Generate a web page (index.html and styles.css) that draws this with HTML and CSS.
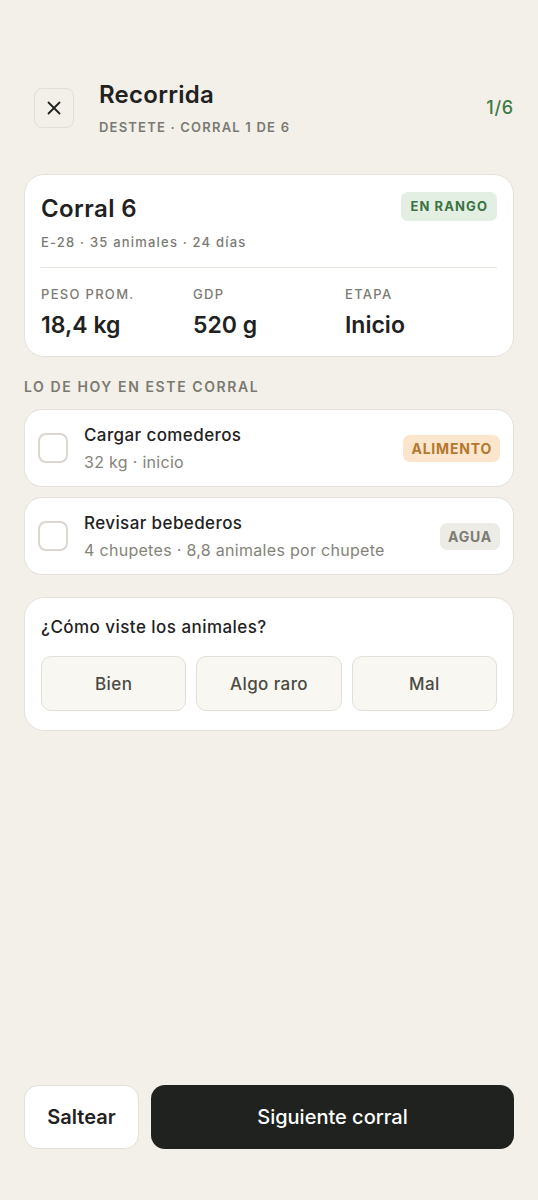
FILE: index.html
```html
<!DOCTYPE html>
<html lang="es">
<head>
<meta charset="utf-8">
<link rel="stylesheet" href="styles.css">
</head>
<body>
<div class="screen">
  <header class="top">
    <button class="close" aria-label="Cerrar">
      <svg width="16" height="16" viewBox="0 0 16 16"><path d="M2.5 2.5 L13.5 13.5 M13.5 2.5 L2.5 13.5" stroke="#1f221e" stroke-width="1.8" stroke-linecap="round"/></svg>
    </button>
    <div class="heading">
      <h1 class="title">Recorrida</h1>
      <div class="subtitle">DESTETE · CORRAL 1 DE 6</div>
    </div>
    <div class="progress">1/6</div>
  </header>

  <section class="card pen">
    <div class="pen-head">
      <div>
        <h2 class="pen-name">Corral 6</h2>
        <div class="pen-meta">E-28 · 35 animales · 24 días</div>
      </div>
      <span class="badge badge-green">EN RANGO</span>
    </div>
    <div class="divider"></div>
    <div class="stats">
      <div class="stat"><div class="stat-label">PESO PROM.</div><div class="stat-value">18,4 kg</div></div>
      <div class="stat"><div class="stat-label">GDP</div><div class="stat-value">520 g</div></div>
      <div class="stat"><div class="stat-label">ETAPA</div><div class="stat-value">Inicio</div></div>
    </div>
  </section>

  <div class="section-label">LO DE HOY EN ESTE CORRAL</div>

  <div class="tasks">
    <div class="card task">
      <span class="check"></span>
      <div class="task-body">
        <div class="task-title">Cargar comederos</div>
        <div class="task-sub">32 kg · inicio</div>
      </div>
      <span class="badge badge-orange">ALIMENTO</span>
    </div>
    <div class="card task">
      <span class="check"></span>
      <div class="task-body">
        <div class="task-title">Revisar bebederos</div>
        <div class="task-sub">4 chupetes · 8,8 animales por chupete</div>
      </div>
      <span class="badge badge-gray">AGUA</span>
    </div>
  </div>

  <section class="card question">
    <div class="q-title">¿Cómo viste los animales?</div>
    <div class="options">
      <button class="option">Bien</button>
      <button class="option">Algo raro</button>
      <button class="option">Mal</button>
    </div>
  </section>

  <div class="spacer"></div>

  <footer class="actions">
    <button class="btn btn-skip">Saltear</button>
    <button class="btn btn-next">Siguiente corral</button>
  </footer>
</div>
</body>
</html>
```

FILE: styles.css
```css
* { box-sizing: border-box; }
html, body { margin: 0; padding: 0; }
body {
  background: #f3f0ea;
  font-family: Inter, "Noto Sans", sans-serif;
  color: #1f221e;
}
.screen {
  min-height: 1200px;
  display: flex;
  flex-direction: column;
  padding: 86px 24px 51px;
}
.top {
  display: flex;
  align-items: flex-start;
  padding-left: 10px;
  margin-bottom: 39px;
}
.close {
  width: 40px;
  height: 40px;
  margin-top: 2px;
  border: 1px solid #e2ded5;
  border-radius: 8px;
  background: #f3f0ea;
  display: flex;
  align-items: center;
  justify-content: center;
  padding: 0;
}
.heading { margin-left: 25px; flex: 1; }
.title {
  margin: 0;
  font-size: 24px;
  font-weight: 600;
  line-height: 18px;
  letter-spacing: 0.25px;
}
.subtitle {
  margin-top: 15px;
  font-size: 13px;
  font-weight: 600;
  letter-spacing: 1.2px;
  color: #7a7a72;
}
.progress {
  margin-top: 11px;
  font-size: 18px;
  color: #3e7a45;
  font-weight: 500;
  letter-spacing: 0.8px;
}
.card {
  background: #fff;
  border: 1px solid #e6e1d8;
  border-radius: 20px;
}
.pen { padding: 17px 16px 17px; }
.pen-head {
  display: flex;
  justify-content: space-between;
  align-items: flex-start;
}
.pen-name {
  margin: 0;
  font-size: 24px;
  font-weight: 600;
  line-height: 34px;
  letter-spacing: 0.4px;
}
.pen-meta {
  margin-top: 8px;
  font-size: 13px;
  font-weight: 500;
  letter-spacing: 1.2px;
  color: #7b7b73;
}
.badge {
  display: inline-block;
  font-size: 13px;
  font-weight: 700;
  letter-spacing: 1.1px;
  border-radius: 7px;
  padding: 7px 9px;
  line-height: 15px;
}
.badge-green { background: #e3efe2; color: #3b7243; }
.badge-orange { background: #fbe6cd; color: #b5772f; font-size: 14px; letter-spacing: 0.8px; padding: 6px 8px; }
.badge-gray { background: #edebe5; color: #7c7c75; font-size: 14px; letter-spacing: 0.8px; padding: 6px 8px; }
.divider {
  height: 1px;
  background: #e7e4de;
  margin: 17px 0 18px;
}
.stats {
  display: grid;
  grid-template-columns: repeat(3, 1fr);
}
.stat-label {
  font-size: 13px;
  font-weight: 500;
  letter-spacing: 1.3px;
  color: #7b7b73;
}
.stat-value {
  margin-top: 9px;
  font-size: 23px;
  font-weight: 600;
  line-height: 28px;
}
.section-label {
  margin: 21px 0 14px;
  font-size: 14px;
  font-weight: 600;
  letter-spacing: 1.6px;
  color: #7a7a70;
}
.tasks {
  display: flex;
  flex-direction: column;
  gap: 10px;
}
.task {
  display: flex;
  align-items: center;
  border-radius: 18px;
  padding: 0 13px 0 13px;
  height: 78px;
}
.check {
  width: 30px;
  height: 30px;
  border: 2px solid #dbd7ce;
  border-radius: 8px;
  flex: none;
}
.task-body { flex: 1; margin-left: 16px; }
.task-title {
  font-size: 17px;
  font-weight: 500;
  line-height: 22px;
  letter-spacing: 0.4px;
}
.task-sub {
  margin-top: 6px;
  font-size: 16px;
  color: #848379;
  line-height: 20px;
  letter-spacing: 0.3px;
}
.question {
  margin-top: 22px;
  padding: 18px 16px 19px;
}
.q-title {
  font-size: 17px;
  font-weight: 500;
  line-height: 22px;
  letter-spacing: 0.45px;
}
.options {
  margin-top: 18px;
  display: grid;
  grid-template-columns: repeat(3, 1fr);
  gap: 10px;
}
.option {
  height: 55px;
  background: #f9f7f2;
  border: 1px solid #e3dfd6;
  border-radius: 10px;
  font-family: inherit;
  font-size: 17px;
  font-weight: 500;
  letter-spacing: 0.4px;
  color: #4a4a44;
}
.spacer { flex: 1; }
.actions {
  display: flex;
  gap: 12px;
}
.btn {
  height: 64px;
  border-radius: 14px;
  font-family: inherit;
  font-size: 20px;
  font-weight: 600;
}
.btn-skip {
  width: 115px;
  background: #fff;
  border: 1px solid #e3dfd6;
  color: #1f221e;
}
.btn-next {
  flex: 1;
  background: #1f221e;
  border: none;
  color: #fff;
  font-weight: 500;
}
```
